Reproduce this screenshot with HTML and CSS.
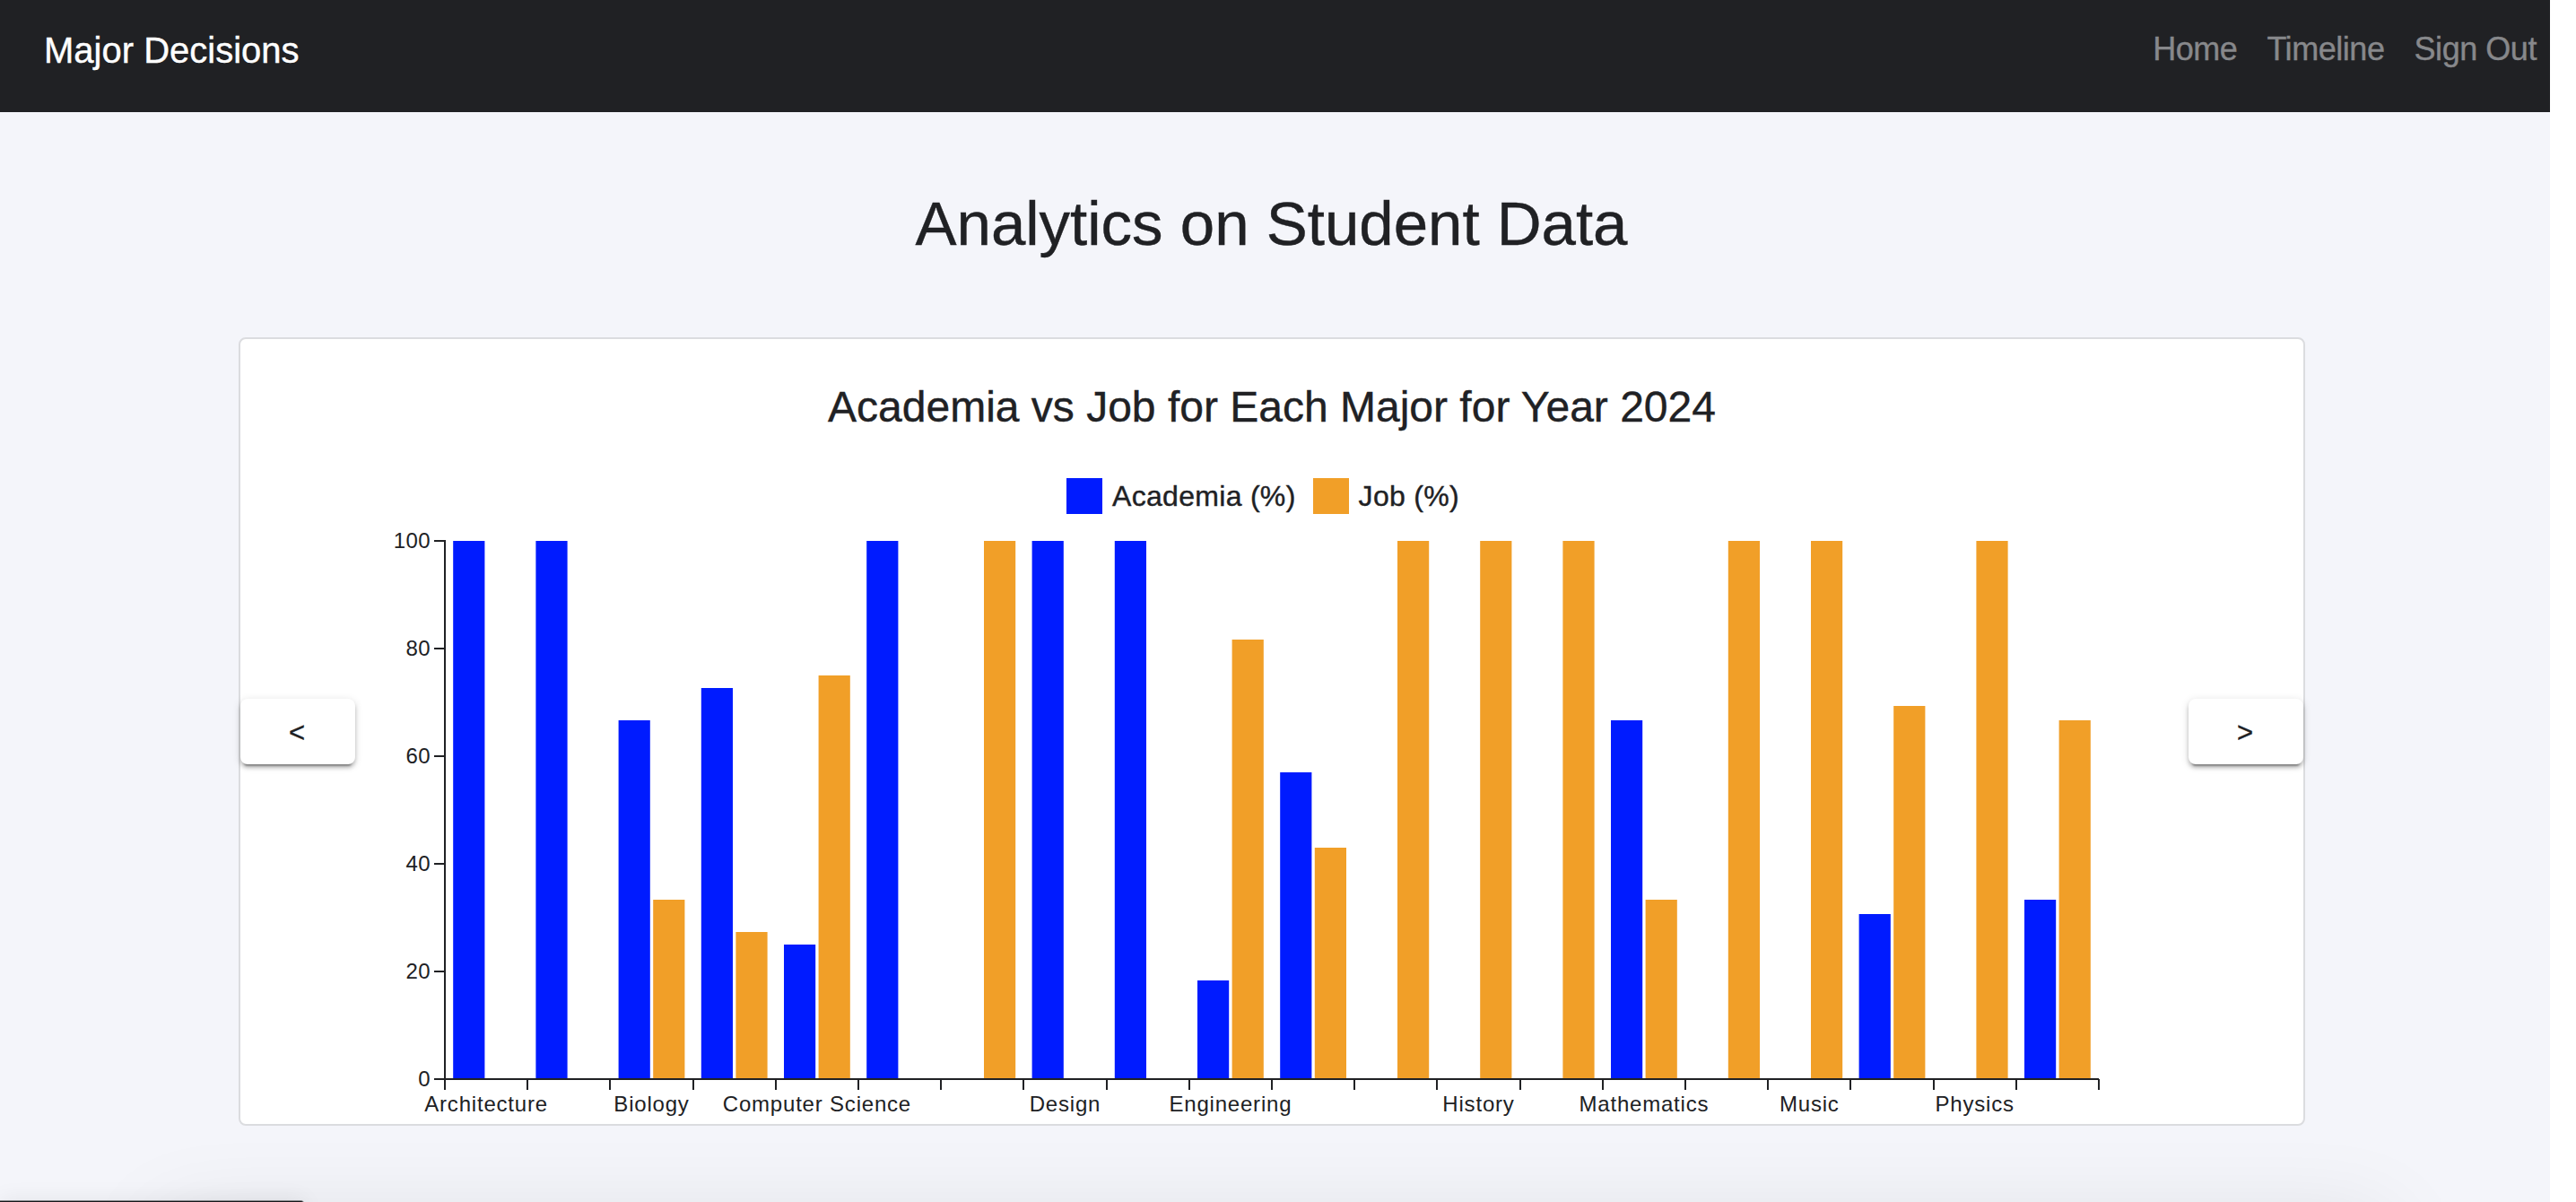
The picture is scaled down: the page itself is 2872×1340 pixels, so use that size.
FILE: index.html
```
<!DOCTYPE html>
<html lang="en">
<head>
    <meta charset="UTF-8">
    <meta name="viewport" content="width=device-width, initial-scale=1.0">
    <title>Major Decisions</title>
    <link rel="stylesheet" href="styles.css">
</head>
<body>
    <div class="page">
        <nav class="navbar">
            <a class="brand" href="#">Major Decisions</a>
            <div class="nav-links">
                <a href="#">Home</a>
                <a href="#">Timeline</a>
                <a href="#">Sign Out</a>
            </div>
        </nav>

        <h1>Analytics on Student Data</h1>

        <div class="card">
            <button class="arrow">&lt;</button>
            <div class="slide">
                <h2>Academia vs Job for Each Major for Year 2024</h2>
                <div class="legend">
                    <span class="swatch academia"></span><span class="legend-text">Academia (%)</span>
                    <span class="swatch job"></span><span class="legend-text">Job (%)</span>
                </div>
                <svg id="chart" class="chart" width="2044" height="663" viewBox="0 0 2044 663"></svg>
            </div>
            <button class="arrow">&gt;</button>
        </div>

        <div class="bottom-edge">
            <div class="bottom-shadow"></div>
            <div class="status-bar"></div>
        </div>
    </div>

    <script>
        // [label, academia %, job %] - not every major has room for a label
        const majors = [
            ['Architecture', 100, 0],
            ['', 100, 0],
            ['Biology', 66.67, 33.33],
            ['', 72.67, 27.33],
            ['Computer Science', 25, 75],
            ['', 100, 0],
            ['', 0, 100],
            ['Design', 100, 0],
            ['', 100, 0],
            ['Engineering', 18.33, 81.67],
            ['', 57, 43],
            ['', 0, 100],
            ['History', 0, 100],
            ['', 0, 100],
            ['Mathematics', 66.67, 33.33],
            ['', 0, 100],
            ['Music', 0, 100],
            ['', 30.67, 69.33],
            ['Physics', 0, 100],
            ['', 33.33, 66.67]
        ];

        const chart = document.getElementById('chart');
        const left = 100;
        const top0 = 13;
        const width = 1844;
        const height = 600;
        const band = width / majors.length;
        const bottom = top0 + height;

        function add(tag, attrs, text) {
            const el = document.createElementNS('http://www.w3.org/2000/svg', tag);
            for (const key in attrs) {
                el.setAttribute(key, attrs[key]);
            }
            if (text) el.textContent = text;
            chart.appendChild(el);
        }

        function bar(x, value, name) {
            if (value === 0) return;
            const h = Math.round(value * height / 100);
            add('rect', { class: name, x: x, y: bottom - h, width: 35.2, height: h });
        }

        // Bars
        majors.forEach(([label, academia, job], i) => {
            const x = left + i * band;
            bar(x + 9.2, academia, 'academia');
            bar(x + 47.8, job, 'job');
        });

        // X axis
        add('path', { class: 'axis', d: `M${left} ${bottom}H${left + width}` });
        for (let i = 0; i <= majors.length; i++) {
            const x = Math.round(left + i * band);
            add('path', { class: 'axis', d: `M${x} ${bottom}v12` });
        }
        majors.forEach(([label], i) => {
            if (label) add('text', { class: 'x-label', x: left + (i + 0.5) * band, y: 649 }, label);
        });

        // Y axis
        add('path', { class: 'axis', d: `M${left} ${top0 - 1}V${bottom + 1}` });
        for (let v = 0; v <= 100; v += 20) {
            const y = bottom - v * height / 100;
            add('path', { class: 'axis', d: `M${left - 12} ${y}h12` });
            add('text', { class: 'y-label', x: left - 16, y: y + 8 }, String(v));
        }
    </script>
</body>
</html>
```
FILE: styles.css
```
body {
    font-family: "Liberation Sans", Arial, sans-serif;
    background-color: #ffffff;
    color: #202124;
    margin: 0;
    -webkit-text-stroke: 0.4px;
}

.page {
    position: relative;
    width: 2843px;
    height: 1340px;
    background-color: #f4f5fa;
}

.navbar {
    display: flex;
    justify-content: space-between;
    box-sizing: border-box;
    height: 125px;
    padding: 33px 15px 0 49px;
    background-color: #202124;
}

.navbar a {
    text-decoration: none;
}

.brand {
    color: #ffffff;
    font-size: 40px;
    line-height: 46px;
}

.nav-links {
    display: flex;
    gap: 33px;
    font-size: 36px;
    line-height: 44px;
    letter-spacing: -0.45px;
}

.nav-links a {
    color: #87888b;
}

h1 {
    margin: 0 8px 0 0;
    padding-top: 85px;
    height: 166px;
    font-size: 69px;
    font-weight: 400;
    line-height: 80px;
    text-align: center;
}

.card {
    display: flex;
    align-items: center;
    box-sizing: border-box;
    width: 2304px;
    height: 879px;
    margin-left: 266px;
    background-color: #ffffff;
    border: 2px solid #dbdcdf;
    border-radius: 8px;
}

.arrow {
    width: 128px;
    height: 73px;
    padding: 3px 2px 0 0;
    border: none;
    border-radius: 8px;
    background-color: #ffffff;
    color: #202124;
    font-family: inherit;
    font-size: 31px;
    cursor: pointer;
    box-shadow: 0 6px 2px -4px rgba(0, 0, 0, 0.3), 0 4px 4px 0 rgba(0, 0, 0, 0.2), 0 2px 10px 0 rgba(0, 0, 0, 0.14);
}

.slide {
    width: 2044px;
    height: 875px;
}

h2 {
    margin: 0;
    padding-top: 48px;
    height: 107px;
    font-size: 48px;
    font-weight: 400;
    line-height: 56px;
    text-align: center;
}

.legend {
    display: flex;
    justify-content: center;
    align-items: center;
    height: 40px;
    margin: 0 20px 17px 0;
    font-size: 32px;
    letter-spacing: 0.3px;
}

.legend-text {
    padding-top: 1px;
}

.swatch {
    width: 40px;
    height: 40px;
    margin-right: 11px;
}

.legend-text + .swatch {
    margin-left: 19px;
}

.swatch.academia {
    background-color: #001bff;
}

.swatch.job {
    background-color: #f19f28;
}

.chart {
    display: block;
}

rect.academia {
    fill: #001bff;
}

rect.job {
    fill: #f19f28;
}

.axis {
    stroke: #202124;
    stroke-width: 2;
    fill: none;
}

.x-label,
.y-label {
    fill: #202124;
    font-size: 24px;
}

.x-label {
    text-anchor: middle;
    letter-spacing: 0.8px;
}

.y-label {
    text-anchor: end;
    letter-spacing: 0.4px;
}

/* soft shadow and link status bar along the bottom edge */
.bottom-edge {
    position: absolute;
    left: 0;
    bottom: 0;
    width: 2843px;
    height: 84px;
    overflow: hidden;
}

.bottom-shadow {
    position: absolute;
    left: 180px;
    top: 104px;
    width: 2480px;
    height: 100px;
    box-shadow: 0 0 100px rgba(0, 0, 0, 0.1);
}

.status-bar {
    position: absolute;
    left: 0;
    top: 82px;
    width: 339px;
    height: 20px;
    border-top: 1px solid #8b8c8f;
    border-top-right-radius: 4px;
    box-sizing: border-box;
    background-color: #17181b;
    box-shadow: 0 0 24px rgba(0, 0, 0, 0.08);
}
```
